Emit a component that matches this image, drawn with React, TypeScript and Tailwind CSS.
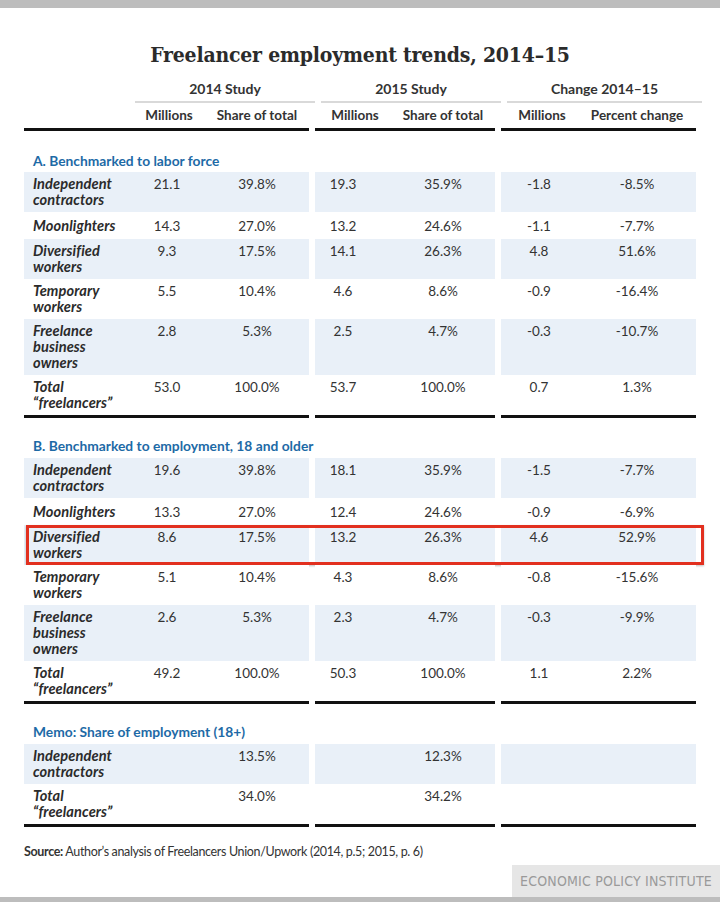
import React from 'react'

type Row = {
  label: string[]
  values: string[]
  h: string
}

const sectionA: Row[] = [
  { label: ['Independent', 'contractors'], values: ['21.1', '39.8%', '19.3', '35.9%', '-1.8', '-8.5%'], h: 'h-[40px]' },
  { label: ['Moonlighters'], values: ['14.3', '27.0%', '13.2', '24.6%', '-1.1', '-7.7%'], h: 'h-[27px]' },
  { label: ['Diversified', 'workers'], values: ['9.3', '17.5%', '14.1', '26.3%', '4.8', '51.6%'], h: 'h-[40px]' },
  { label: ['Temporary', 'workers'], values: ['5.5', '10.4%', '4.6', '8.6%', '-0.9', '-16.4%'], h: 'h-[40px]' },
  { label: ['Freelance', 'business', 'owners'], values: ['2.8', '5.3%', '2.5', '4.7%', '-0.3', '-10.7%'], h: 'h-[56px]' },
  { label: ['Total', '“freelancers”'], values: ['53.0', '100.0%', '53.7', '100.0%', '0.7', '1.3%'], h: 'h-[40px]' },
]

const sectionB: Row[] = [
  { label: ['Independent', 'contractors'], values: ['19.6', '39.8%', '18.1', '35.9%', '-1.5', '-7.7%'], h: 'h-[40px]' },
  { label: ['Moonlighters'], values: ['13.3', '27.0%', '12.4', '24.6%', '-0.9', '-6.9%'], h: 'h-[27px]' },
  { label: ['Diversified', 'workers'], values: ['8.6', '17.5%', '13.2', '26.3%', '4.6', '52.9%'], h: 'h-[40px]' },
  { label: ['Temporary', 'workers'], values: ['5.1', '10.4%', '4.3', '8.6%', '-0.8', '-15.6%'], h: 'h-[40px]' },
  { label: ['Freelance', 'business', 'owners'], values: ['2.6', '5.3%', '2.3', '4.7%', '-0.3', '-9.9%'], h: 'h-[56px]' },
  { label: ['Total', '“freelancers”'], values: ['49.2', '100.0%', '50.3', '100.0%', '1.1', '2.2%'], h: 'h-[40px]' },
]

const memo: Row[] = [
  { label: ['Independent', 'contractors'], values: ['', '13.5%', '', '12.3%', '', ''], h: 'h-[40px]' },
  { label: ['Total', '“freelancers”'], values: ['', '34.0%', '', '34.2%', '', ''], h: 'h-[40px]' },
]

function DataRow({ row, shaded, highlight }: { row: Row; shaded: boolean; highlight?: boolean }) {
  const bg = shaded ? 'bg-[#e9f0f8]' : 'bg-white'
  const pt = row.label.length === 1 ? 'pt-[6px]' : 'pt-[4px]'
  const v = row.values
  return (
    <div className={`relative flex gap-[6px] ${row.h}`}>
      <div className={`flex w-[285px] ${bg}`}>
        <div className={`w-[105px] pl-[9px] ${pt} font-bold italic text-[14.6px] leading-[16px] tracking-[0.1px] text-[#2b2b2b]`}>
          {row.label.map((l) => (
            <div key={l}>{l}</div>
          ))}
        </div>
        <div className={`w-[80px] pr-[4px] ${pt} text-center`}>{v[0]}</div>
        <div className={`w-[100px] pr-[4px] ${pt} text-center`}>{v[1]}</div>
      </div>
      <div className={`flex w-[180px] ${bg}`}>
        <div className={`w-[80px] pr-[24px] ${pt} text-center`}>{v[2]}</div>
        <div className={`w-[100px] pr-[4px] ${pt} text-center`}>{v[3]}</div>
      </div>
      <div className={`flex w-[195px] ${bg}`}>
        <div className={`w-[82px] pr-[6px] ${pt} text-center`}>{v[4]}</div>
        <div className={`w-[113px] pr-[5px] ${pt} text-center`}>{v[5]}</div>
      </div>
      {highlight && (
        <div className="absolute left-[2px] right-[16px] top-0 bottom-0 border-[3px] border-[#e2301f] shadow-[0_1px_2px_rgba(0,0,0,0.25)]" />
      )}
    </div>
  )
}

function Rule() {
  return (
    <div className="flex gap-[6px]">
      <div className="h-[3px] w-[285px] bg-[#111]" />
      <div className="h-[3px] w-[180px] bg-[#111]" />
      <div className="h-[3px] w-[195px] bg-[#111]" />
    </div>
  )
}

function Section({ title, rows, pt, highlightIndex }: { title: string; rows: Row[]; pt: string; highlightIndex?: number }) {
  return (
    <div>
      <div className={`h-[40px] ${pt} pl-[9px] text-[13.8px] leading-[18px] font-bold text-[#1d6aa6]`}>{title}</div>
      {rows.map((r, i) => (
        <DataRow key={i} row={r} shaded={i % 2 === 0} highlight={i === highlightIndex} />
      ))}
      <Rule />
    </div>
  )
}

export default function App() {
  return (
    <div className="relative w-[720px] h-[902px] bg-white text-[#333] font-['Lato',sans-serif] text-[13.5px] leading-[16px] overflow-hidden">
      <div className="h-[8px] bg-[#bdbdbd]" />

      {/* Title */}
      <div className="h-[70px] pt-[33px] text-center">
        <h1 className="font-['DejaVu_Serif_Condensed','DejaVu_Serif',serif] font-bold text-[21px] leading-[28px] text-[#2b2b2b] tracking-[-0.2px]">
          Freelancer employment trends, 2014–15
        </h1>
      </div>

      <div className="pl-[24px]">
        {/* Column headers */}
        <div className="flex gap-[6px] h-[23px] text-[14px] leading-[22px] font-bold">
          <div className="w-[105px]" />
          <div className="w-[180px] text-center">2014 Study</div>
          <div className="w-[180px] text-center">2015 Study</div>
          <div className="w-[195px] text-center">Change 2014–15</div>
        </div>
        <div className="flex gap-[6px]">
          <div className="w-[105px]" />
          <div className="h-[2px] w-[180px] bg-[#d9d9d9]" />
          <div className="h-[2px] w-[180px] bg-[#d9d9d9]" />
          <div className="h-[2px] w-[195px] bg-[#d9d9d9]" />
        </div>
        <div className="flex gap-[6px] h-[25px] text-[13.5px] leading-[25px] font-bold">
          <div className="flex w-[285px]">
            <div className="w-[105px]" />
            <div className="w-[80px] text-center">Millions</div>
            <div className="w-[100px] pr-[4px] text-center">Share of total</div>
          </div>
          <div className="flex w-[180px]">
            <div className="w-[80px] text-center">Millions</div>
            <div className="w-[100px] pr-[4px] text-center">Share of total</div>
          </div>
          <div className="flex w-[195px]">
            <div className="w-[82px] text-center">Millions</div>
            <div className="w-[113px] pr-[5px] text-center">Percent change</div>
          </div>
        </div>
        <Rule />

        <div className="h-[1px]" />
        <Section title="A. Benchmarked to labor force" rows={sectionA} pt="pt-[20px]" />
        <Section title="B. Benchmarked to employment, 18 and older" rows={sectionB} pt="pt-[19px]" highlightIndex={2} />
        <Section title="Memo: Share of employment (18+)" rows={memo} pt="pt-[19px]" />

        <div className="pt-[17px] text-[12.5px] leading-[16px] tracking-[-0.35px]">
          <span className="font-bold">Source:</span> Author’s analysis of Freelancers Union/Upwork (2014, p.5; 2015, p. 6)
        </div>
      </div>

      <div className="absolute right-0 bottom-[5px] w-[208px] h-[32px] bg-[#e6e6e6] flex items-center justify-center">
        <span className="font-['DejaVu_Sans_Condensed','Liberation_Sans_Narrow','Roboto',sans-serif] text-[14px] text-[#9a9a9a] tracking-[0.2px]">
          ECONOMIC POLICY INSTITUTE
        </span>
      </div>
      <div className="absolute left-0 right-0 bottom-0 h-[5px] bg-[#bdbdbd]" />
    </div>
  )
}
